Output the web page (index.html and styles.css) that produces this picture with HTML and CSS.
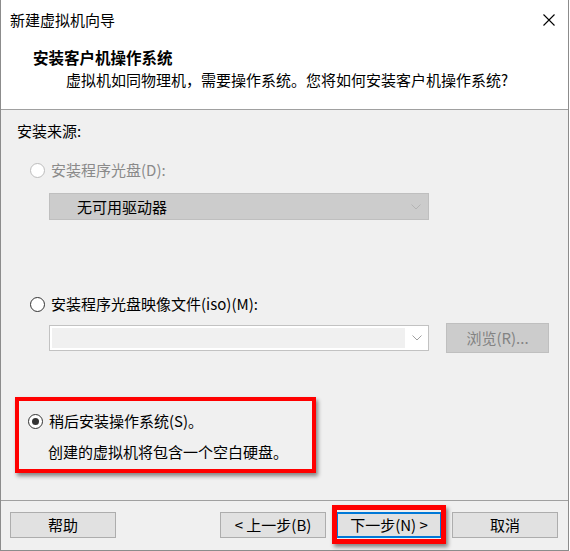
FILE: index.html
```html
<!DOCTYPE html>
<html lang="zh-CN">
<head>
  <meta charset="UTF-8">
  <title>新建虚拟机向导</title>
  <link rel="stylesheet" href="styles.css">
</head>
<body>
  <div class="window">
    <div class="titlebar">
      <span class="title">新建虚拟机向导</span>
      <svg class="close" width="12" height="12" viewBox="0 0 12 12">
        <path d="M0.5 0.5 L11.5 11.5 M11.5 0.5 L0.5 11.5" stroke="#000" stroke-width="1.1" fill="none"/>
      </svg>
    </div>

    <div class="header">
      <div class="header-title">安装客户机操作系统</div>
      <div class="header-sub">虚拟机如同物理机，需要操作系统。您将如何安装客户机操作系统?</div>
    </div>

    <div class="content">
      <div class="label">安装来源:</div>

      <div class="radio-row disabled first">
        <span class="radio"></span>
        <span>安装程序光盘(D):</span>
      </div>
      <div class="select disabled">
        <span>无可用驱动器</span>
        <svg class="arrow" width="10" height="6" viewBox="0 0 10 6">
          <path d="M0.5 0.5 L5 5 L9.5 0.5" stroke="#b4b4b4" fill="none"/>
        </svg>
      </div>

      <div class="radio-row second">
        <span class="radio"></span>
        <span>安装程序光盘映像文件(iso)(M):</span>
      </div>
      <div class="iso-row">
        <div class="combo">
          <div class="combo-field"></div>
          <svg class="arrow" width="10" height="6" viewBox="0 0 10 6">
            <path d="M0.5 0.5 L5 5 L9.5 0.5" stroke="#a0a0a0" fill="none"/>
          </svg>
        </div>
        <div class="browse">浏览(R)...</div>
      </div>

      <div class="later-box">
        <div class="radio-row">
          <span class="radio checked"></span>
          <span>稍后安装操作系统(S)。</span>
        </div>
        <div class="later-note">创建的虚拟机将包含一个空白硬盘。</div>
      </div>
    </div>

    <div class="footer">
      <div class="btn">帮助</div>
      <div class="btn-group">
        <div class="btn">&lt; 上一步(B)</div>
        <div class="btn primary">下一步(N) &gt;</div>
        <div class="btn">取消</div>
      </div>
    </div>
  </div>
</body>
</html>
```

FILE: styles.css
```css
* {
  box-sizing: border-box;
}
body {
  margin: 0;
  font-family: "Noto Sans CJK SC", "Noto Sans", sans-serif;
  font-size: 15px;
  color: #000;
  background: #fff;
}
.window {
  width: 569px;
  height: 551px;
  border-left: 1px solid #8c8c8c;
  border-right: 1px solid #8c8c8c;
  border-bottom: 1px solid #8c8c8c;
  display: flex;
  flex-direction: column;
  background: #f0f0f0;
}
.titlebar {
  height: 40px;
  background: #fff;
  display: flex;
  align-items: center;
  justify-content: space-between;
  padding: 0 13px 0 9px;
  line-height: 20px;
}
.header {
  height: 70px;
  background: #fff;
  border-bottom: 1px solid #a0a0a0;
  padding: 7px 0 0 32px;
  line-height: 20px;
}
.header-title {
  font-weight: bold;
  font-size: 15.5px;
}
.header-sub {
  margin-top: 3px;
  padding-left: 33px;
}
.content {
  flex: 1;
  padding: 11px 0 0 16px;
  line-height: 20px;
}
.radio-row {
  display: flex;
  align-items: center;
}
.radio-row.first {
  margin: 19px 0 0 13px;
}
.radio-row.second {
  margin: 74px 0 0 13px;
}
.radio-row.disabled {
  color: #8a8a8a;
}
.radio {
  width: 15px;
  height: 15px;
  border: 1px solid #333;
  border-radius: 50%;
  background: #fff;
  margin-right: 6px;
  position: relative;
}
.radio-row.disabled .radio {
  border-color: #bcbcbc;
}
.radio.checked::after {
  content: "";
  position: absolute;
  left: 3px;
  top: 3px;
  width: 7px;
  height: 7px;
  border-radius: 50%;
  background: #333;
}
.select {
  width: 380px;
  height: 27px;
  margin: 13px 0 0 32px;
  background: #cccccc;
  border: 1px solid #bfbfbf;
  display: flex;
  align-items: center;
  justify-content: space-between;
  padding: 0 7px 0 27px;
}
.iso-row {
  display: flex;
  align-items: center;
  margin: 9px 0 0 32px;
  height: 30px;
}
.combo {
  width: 380px;
  height: 26px;
  background: #fff;
  border: 1px solid #c2c2c2;
  display: flex;
  align-items: center;
  justify-content: space-between;
  padding: 0 6px 0 2px;
}
.combo-field {
  width: 353px;
  height: 20px;
  background: #f0f0f0;
}
.browse {
  width: 103px;
  height: 30px;
  margin-left: 17px;
  background: #cccccc;
  border: 1px solid #bfbfbf;
  color: #838383;
  display: flex;
  align-items: center;
  justify-content: center;
}
.later-box {
  width: 301px;
  height: 76px;
  margin: 44px 0 0 -2px;
  border: 4px solid #ff0000;
  box-shadow: 2px 3px 4px rgba(0, 0, 0, 0.45);
  padding: 10px 0 0 9px;
}
.later-box .radio-row {
  height: 20px;
}
.later-note {
  margin: 11px 0 0 20px;
}
.footer {
  height: 50px;
  border-top: 1px solid #a0a0a0;
  display: flex;
  align-items: flex-start;
  justify-content: space-between;
  padding: 11px 10px 0 9px;
}
.btn-group {
  display: flex;
  gap: 10px;
}
.btn {
  width: 106px;
  height: 26px;
  background: #e1e1e1;
  border: 1px solid #adadad;
  display: flex;
  align-items: center;
  justify-content: center;
  line-height: 20px;
  position: relative;
}
.btn.primary {
  border: 2px solid #0078d7;
}
.btn.primary::after {
  content: "";
  position: absolute;
  left: -6px;
  right: -6px;
  top: -9px;
  bottom: -8px;
  border: 5px solid #ff0000;
  box-shadow: 2px 3px 4px rgba(0, 0, 0, 0.45);
}
```
